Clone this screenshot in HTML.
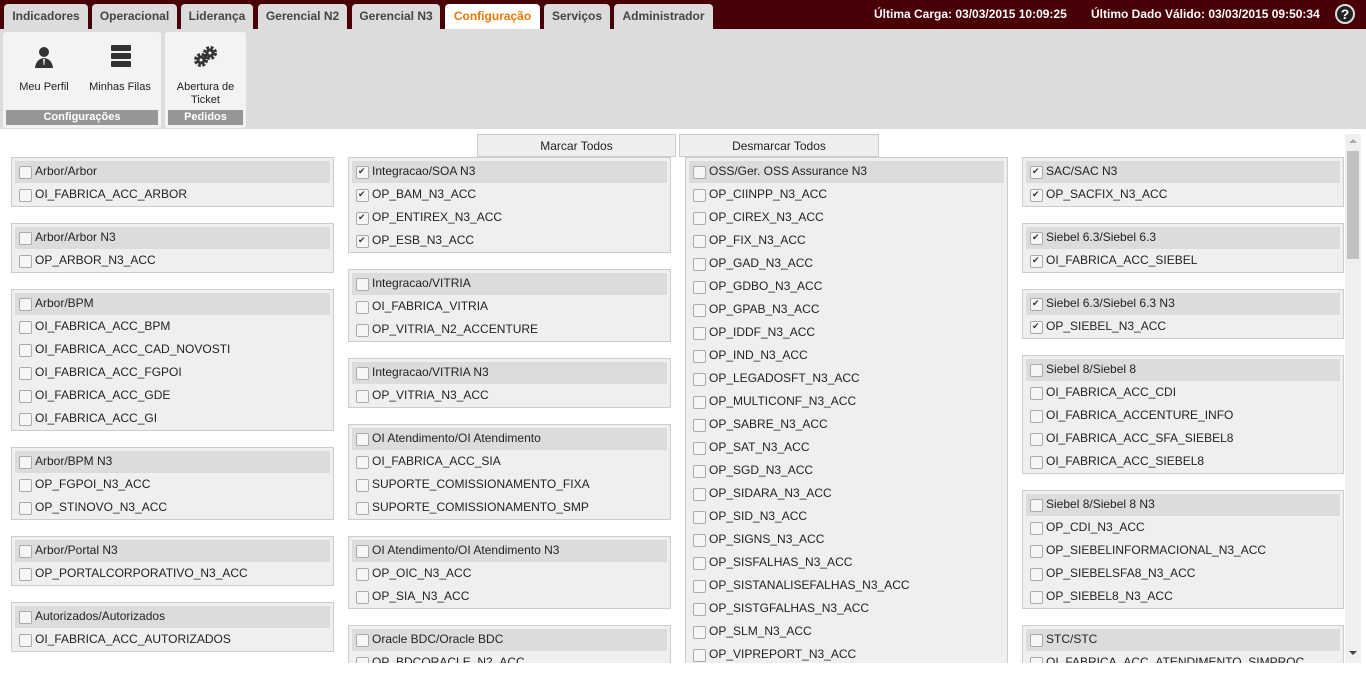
<!DOCTYPE html>
<html><head><meta charset="utf-8"><style>
*{box-sizing:border-box;margin:0;padding:0}
body{width:1366px;height:677px;overflow:hidden;background:#fff;font-family:"Liberation Sans",Tahoma,sans-serif;font-size:12px;color:#222;position:relative}
#top{position:absolute;left:0;top:0;width:1366px;height:29px;background:#480006}
.tab{position:absolute;top:4px;height:25px;background:#dcdcdc;border-radius:4px 4px 0 0;font-weight:bold;font-size:12px;color:#444;text-align:center;line-height:25px}
.tab.act{background:#fff;color:#f07800}
.info{position:absolute;top:7px;color:#fff;font-weight:bold;font-size:12px}
#help{position:absolute;left:1335px;top:4px;width:20px;height:20px;border-radius:50%;background:#222;border:2px solid #ddd;color:#fff;font-weight:bold;font-size:14px;text-align:center;line-height:16px}
#rib{position:absolute;left:0;top:29px;width:1366px;height:100px;background:#dcdcdc}
.grp{position:absolute;top:3px;height:96px;background:#f3f3f3;border-radius:3px}
.glab{position:absolute;bottom:3px;left:3px;right:3px;height:15px;background:#969696;color:#fff;font-weight:bold;font-size:11px;text-align:center;line-height:15px}
.btn{position:absolute;text-align:center;font-size:11px;color:#222;line-height:13px}
.bt{position:absolute;top:134px;height:23px;background:#eee;border:1px solid #ccc;text-align:center;line-height:22px;font-size:12px}
#clip{position:absolute;left:0;top:129px;width:1345px;height:534px;overflow:hidden}
.col{position:absolute;top:28px;width:323px}
.box{border:1px solid #ccc;background:#efefef;padding:3px 3px 0;margin-bottom:16px}
.h{height:22px;background:#dcdcdc;line-height:21px;padding-left:20px;position:relative;margin-bottom:0}
.r{height:23px;line-height:23px;padding-left:20px;position:relative}
.h:before,.r:before{content:"";position:absolute;left:4px;top:5px;width:11px;height:11px;border:1px solid #aaa;border-radius:2px;background:#f6f6f6}
.r:before{top:6px}
.c:after{content:"✔";position:absolute;left:6px;top:0;font-size:9px;color:#333}
#sb{position:absolute;left:1345px;top:134px;width:16px;height:529px;background:#f0f0f0}
#sbt{position:absolute;left:1347px;top:151px;width:12px;height:108px;background:#c1c1c1}
</style></head><body>
<div id="top">
<div class="tab" style="left:4px;width:84px">Indicadores</div>
<div class="tab" style="left:92px;width:85px">Operacional</div>
<div class="tab" style="left:181px;width:72px">Liderança</div>
<div class="tab" style="left:258px;width:89px">Gerencial N2</div>
<div class="tab" style="left:352px;width:88px">Gerencial N3</div>
<div class="tab act" style="left:445px;width:95px">Configuração</div>
<div class="tab" style="left:544px;width:66px">Serviços</div>
<div class="tab" style="left:614px;width:99px">Administrador</div>
<div class="info" style="left:874px">Última Carga: 03/03/2015 10:09:25</div>
<div class="info" style="left:1091px">Último Dado Válido: 03/03/2015 09:50:34</div>
<div id="help">?</div>
</div>
<div id="rib">
<div class="grp" style="left:3px;width:158px">
<svg style="position:absolute;left:30px;top:14px" width="22" height="22" viewBox="0 0 22 22"><circle cx="11" cy="6" r="5" fill="#333"/><path d="M2 22 Q3 13 11 12 Q19 13 20 22Z" fill="#333"/><path d="M10 13 L12 13 L11.5 19 L10.5 19Z" fill="#ddd"/></svg>
<svg style="position:absolute;left:108px;top:13px" width="20" height="22" viewBox="0 0 20 22"><rect x="0" y="0" width="20" height="6" rx="1" fill="#333"/><rect x="0" y="8" width="20" height="6" rx="1" fill="#333"/><rect x="0" y="16" width="20" height="6" rx="1" fill="#333"/></svg>
<div class="btn" style="left:10px;top:49px;width:62px">Meu Perfil</div>
<div class="btn" style="left:82px;top:49px;width:70px">Minhas Filas</div>
<div class="glab">Configurações</div></div>
<div class="grp" style="left:165px;width:81px">
<svg style="position:absolute;left:29px;top:13px" width="24" height="22" viewBox="0 0 24 22"><circle cx="16" cy="8" r="5" fill="none" stroke="#333" stroke-width="4" stroke-dasharray="2.5 1.5"/><circle cx="16" cy="8" r="4.5" fill="#333"/><circle cx="16" cy="8" r="1.5" fill="#f3f3f3"/><circle cx="7" cy="15" r="5" fill="none" stroke="#333" stroke-width="4" stroke-dasharray="2.5 1.5"/><circle cx="7" cy="15" r="4.5" fill="#333"/><circle cx="7" cy="15" r="1.5" fill="#f3f3f3"/></svg>
<div class="btn" style="left:0;top:49px;width:81px">Abertura de<br>Ticket</div>
<div class="glab">Pedidos</div></div>
</div>
<div class="bt" style="left:477px;width:199px">Marcar Todos</div>
<div class="bt" style="left:679px;width:200px">Desmarcar Todos</div>
<div id="clip">
<div class="col" style="left:11px">
<div class="box"><div class="h">Arbor/Arbor</div><div class="r">OI_FABRICA_ACC_ARBOR</div></div>
<div class="box"><div class="h">Arbor/Arbor N3</div><div class="r">OP_ARBOR_N3_ACC</div></div>
<div class="box"><div class="h">Arbor/BPM</div><div class="r">OI_FABRICA_ACC_BPM</div><div class="r">OI_FABRICA_ACC_CAD_NOVOSTI</div><div class="r">OI_FABRICA_ACC_FGPOI</div><div class="r">OI_FABRICA_ACC_GDE</div><div class="r">OI_FABRICA_ACC_GI</div></div>
<div class="box"><div class="h">Arbor/BPM N3</div><div class="r">OP_FGPOI_N3_ACC</div><div class="r">OP_STINOVO_N3_ACC</div></div>
<div class="box"><div class="h">Arbor/Portal N3</div><div class="r">OP_PORTALCORPORATIVO_N3_ACC</div></div>
<div class="box"><div class="h">Autorizados/Autorizados</div><div class="r">OI_FABRICA_ACC_AUTORIZADOS</div></div>
</div>
<div class="col" style="left:348px">
<div class="box"><div class="h c">Integracao/SOA N3</div><div class="r c">OP_BAM_N3_ACC</div><div class="r c">OP_ENTIREX_N3_ACC</div><div class="r c">OP_ESB_N3_ACC</div></div>
<div class="box"><div class="h">Integracao/VITRIA</div><div class="r">OI_FABRICA_VITRIA</div><div class="r">OP_VITRIA_N2_ACCENTURE</div></div>
<div class="box"><div class="h">Integracao/VITRIA N3</div><div class="r">OP_VITRIA_N3_ACC</div></div>
<div class="box"><div class="h">OI Atendimento/OI Atendimento</div><div class="r">OI_FABRICA_ACC_SIA</div><div class="r">SUPORTE_COMISSIONAMENTO_FIXA</div><div class="r">SUPORTE_COMISSIONAMENTO_SMP</div></div>
<div class="box"><div class="h">OI Atendimento/OI Atendimento N3</div><div class="r">OP_OIC_N3_ACC</div><div class="r">OP_SIA_N3_ACC</div></div>
<div class="box"><div class="h">Oracle BDC/Oracle BDC</div><div class="r">OP_BDCORACLE_N2_ACC</div></div>
</div>
<div class="col" style="left:685px">
<div class="box"><div class="h">OSS/Ger. OSS Assurance N3</div><div class="r">OP_CIINPP_N3_ACC</div><div class="r">OP_CIREX_N3_ACC</div><div class="r">OP_FIX_N3_ACC</div><div class="r">OP_GAD_N3_ACC</div><div class="r">OP_GDBO_N3_ACC</div><div class="r">OP_GPAB_N3_ACC</div><div class="r">OP_IDDF_N3_ACC</div><div class="r">OP_IND_N3_ACC</div><div class="r">OP_LEGADOSFT_N3_ACC</div><div class="r">OP_MULTICONF_N3_ACC</div><div class="r">OP_SABRE_N3_ACC</div><div class="r">OP_SAT_N3_ACC</div><div class="r">OP_SGD_N3_ACC</div><div class="r">OP_SIDARA_N3_ACC</div><div class="r">OP_SID_N3_ACC</div><div class="r">OP_SIGNS_N3_ACC</div><div class="r">OP_SISFALHAS_N3_ACC</div><div class="r">OP_SISTANALISEFALHAS_N3_ACC</div><div class="r">OP_SISTGFALHAS_N3_ACC</div><div class="r">OP_SLM_N3_ACC</div><div class="r">OP_VIPREPORT_N3_ACC</div><div class="r">OP_VOZ_N3_ACC</div></div>
</div>
<div class="col" style="left:1022px;width:322px">
<div class="box"><div class="h c">SAC/SAC N3</div><div class="r c">OP_SACFIX_N3_ACC</div></div>
<div class="box"><div class="h c">Siebel 6.3/Siebel 6.3</div><div class="r c">OI_FABRICA_ACC_SIEBEL</div></div>
<div class="box"><div class="h c">Siebel 6.3/Siebel 6.3 N3</div><div class="r c">OP_SIEBEL_N3_ACC</div></div>
<div class="box"><div class="h">Siebel 8/Siebel 8</div><div class="r">OI_FABRICA_ACC_CDI</div><div class="r">OI_FABRICA_ACCENTURE_INFO</div><div class="r">OI_FABRICA_ACC_SFA_SIEBEL8</div><div class="r">OI_FABRICA_ACC_SIEBEL8</div></div>
<div class="box"><div class="h">Siebel 8/Siebel 8 N3</div><div class="r">OP_CDI_N3_ACC</div><div class="r">OP_SIEBELINFORMACIONAL_N3_ACC</div><div class="r">OP_SIEBELSFA8_N3_ACC</div><div class="r">OP_SIEBEL8_N3_ACC</div></div>
<div class="box"><div class="h">STC/STC</div><div class="r">OI_FABRICA_ACC_ATENDIMENTO_SIMPROC</div></div>
</div>
</div>
<div id="sb"></div><div id="sbt"></div>
<div style="position:absolute;left:1349px;top:139px;width:0;height:0;border-left:4px solid transparent;border-right:4px solid transparent;border-bottom:4px solid #aaa"></div>
<div style="position:absolute;left:1349px;top:651px;width:0;height:0;border-left:4px solid transparent;border-right:4px solid transparent;border-top:4px solid #444"></div>
</body></html>
